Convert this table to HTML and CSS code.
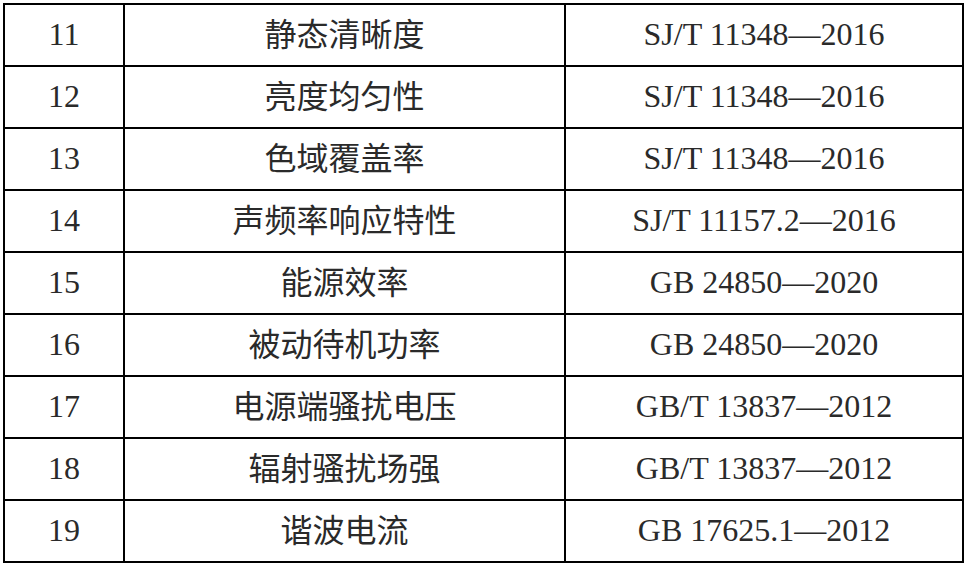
FILE: index.html
```html
<!DOCTYPE html>
<html lang="zh">
<head>
<meta charset="utf-8">
<link rel="stylesheet" href="styles.css">
</head>
<body>
<div class="table">
  <div class="cell num">11</div><div class="cell name">静态清晰度</div><div class="cell std">SJ/T 11348—2016</div>
  <div class="cell num">12</div><div class="cell name">亮度均匀性</div><div class="cell std">SJ/T 11348—2016</div>
  <div class="cell num">13</div><div class="cell name">色域覆盖率</div><div class="cell std">SJ/T 11348—2016</div>
  <div class="cell num">14</div><div class="cell name">声频率响应特性</div><div class="cell std">SJ/T 11157.2—2016</div>
  <div class="cell num">15</div><div class="cell name">能源效率</div><div class="cell std">GB 24850—2020</div>
  <div class="cell num">16</div><div class="cell name">被动待机功率</div><div class="cell std">GB 24850—2020</div>
  <div class="cell num">17</div><div class="cell name">电源端骚扰电压</div><div class="cell std">GB/T 13837—2012</div>
  <div class="cell num">18</div><div class="cell name">辐射骚扰场强</div><div class="cell std">GB/T 13837—2012</div>
  <div class="cell num">19</div><div class="cell name">谐波电流</div><div class="cell std">GB 17625.1—2012</div>
</div>
</body>
</html>
```
FILE: styles.css
```css
html, body {
  margin: 0;
  padding: 0;
  background: #fff;
}
body {
  padding: 3px;
}
.table {
  display: grid;
  grid-template-columns: 118px 439px 396px;
  grid-auto-rows: 60px;
  gap: 2px;
  padding: 2px;
  background: #000;
  width: max-content;
}
.cell {
  background: #fff;
  display: flex;
  align-items: center;
  justify-content: center;
  font-family: "Liberation Serif", "Noto Sans CJK SC", serif;
  font-size: 32px;
  color: #2a2a2a;
  padding-bottom: 2px;
  box-sizing: border-box;
}
.name {
  font-family: "Noto Sans CJK SC", sans-serif;
  font-size: 32px;
  padding-bottom: 6px;
}
```
